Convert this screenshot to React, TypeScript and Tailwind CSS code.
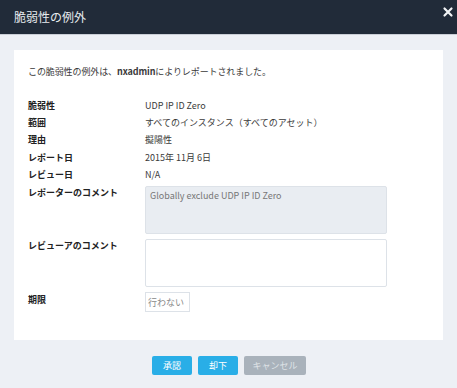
import React from 'react';

const font = { fontFamily: '"Noto Sans CJK JP", "Noto Sans", sans-serif' };

const rows: [string, string][] = [
  ['脆弱性', 'UDP IP ID Zero'],
  ['範囲', 'すべてのインスタンス（すべてのアセット）'],
  ['理由', '擬陽性'],
  ['レポート日', '2015年 11月 6日'],
  ['レビュー日', 'N/A'],
];

export default function App() {
  return (
    <div className="w-[457px] h-[388px] flex flex-col bg-[#edf0f5] overflow-hidden" style={font}>
      <div className="h-[35px] shrink-0 bg-[#212b39] flex items-center justify-between pl-[14px] pr-[3px] border-b border-[#c9ced6]">
        <span className="text-[12px] text-[#e8ebef]">脆弱性の例外</span>
        <svg width="12" height="12" viewBox="0 0 12 12" className="-mt-[10px]">
          <path d="M2.5 2.5l7 7M9.5 2.5l-7 7" stroke="#f2f4f6" strokeWidth="2.2" strokeLinecap="round" />
        </svg>
      </div>

      <div className="mx-[14px] mt-[15px] h-[290px] bg-white px-[14px] pt-[16px] text-[9px] text-[#3a3a3a]">
        <p className="leading-[12px] tracking-[-0.1px]">
          この脆弱性の例外は、<span className="font-bold">nxadmin</span>によりレポートされました。
        </p>

        <div className="mt-[19px] flex flex-col">
          {rows.map(([label, value]) => (
            <div key={label} className="grid grid-cols-[117px_1fr] h-[17.3px] items-center">
              <span className="font-bold text-[#222]">{label}</span>
              <span>{value}</span>
            </div>
          ))}

          <div className="grid grid-cols-[117px_1fr] mt-[3px]">
            <span className="font-bold text-[#222] leading-[11px] pt-[1px]">レポーターのコメント</span>
            <div className="w-[242px] h-[48px] bg-[#e9edf2] border border-[#dde2e8] rounded-[2px] px-[4px] pt-[3px] text-[#777] leading-[12px]">
              Globally exclude UDP IP ID Zero
            </div>
          </div>

          <div className="grid grid-cols-[117px_1fr] mt-[5px]">
            <span className="font-bold text-[#222] leading-[11px] pt-[1px]">レビューアのコメント</span>
            <div className="w-[242px] h-[48px] bg-white border border-[#dde2e8] rounded-[2px]" />
          </div>

          <div className="grid grid-cols-[117px_1fr] mt-[5px]">
            <span className="font-bold text-[#222] leading-[11px] pt-[2px]">期限</span>
            <div className="w-[45px] h-[20px] border border-[#dde2e8] flex items-center px-[2px] text-[#888]">
              行わない
            </div>
          </div>
        </div>
      </div>

      <div className="flex justify-center gap-[6px] mt-[16px] pl-[1px]">
        <button className="w-[40px] h-[19px] bg-[#29aee7] text-white text-[9px] rounded-[2px]">承認</button>
        <button className="w-[40px] h-[19px] bg-[#29aee7] text-white text-[9px] rounded-[2px]">却下</button>
        <button className="w-[62px] h-[19px] bg-[#a9b2bb] text-[#dfe3e7] text-[9px] rounded-[2px]">キャンセル</button>
      </div>
    </div>
  );
}
